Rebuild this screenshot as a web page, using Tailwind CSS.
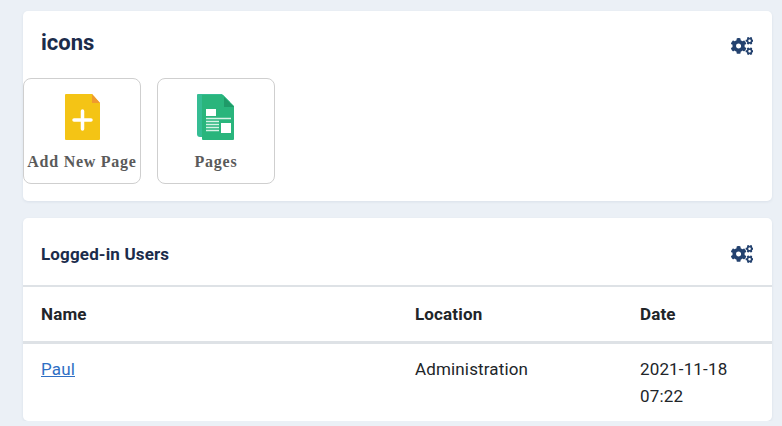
<!DOCTYPE html>
<html>
<head>
<meta charset="utf-8">
<script src="https://cdn.jsdelivr.net/npm/@tailwindcss/browser@4"></script>
</head>
<body class="m-0 bg-[#ebf0f6] font-['Roboto',sans-serif] text-[17px] tracking-[0.15px] text-[#212529] overflow-hidden">
<svg width="0" height="0" class="absolute"><defs><symbol id="cogs" viewBox="0 0 640 512"><path d="M512.1 191l-8.2 14.3c-3 5.3-9.4 7.5-15.1 5.4-11.8-4.4-22.6-10.7-32.1-18.6-4.6-3.8-5.8-10.5-2.8-15.7l8.2-14.3c-6.9-8-12.3-17.3-15.9-27.4h-16.5c-6 0-11.2-4.3-12.2-10.3-2-12-2.1-24.6 0-37.1 1-6 6.2-10.4 12.2-10.4h16.5c3.6-10.1 9-19.4 15.9-27.4l-8.2-14.3c-3-5.2-1.9-11.9 2.8-15.7 9.5-7.9 20.4-14.2 32.1-18.6 5.7-2.1 12.1.1 15.1 5.4l8.2 14.3c10.5-1.9 21.2-1.9 31.7 0L552 6.3c3-5.3 9.4-7.5 15.1-5.4 11.8 4.4 22.6 10.7 32.1 18.6 4.6 3.8 5.8 10.5 2.8 15.7l-8.2 14.3c6.9 8 12.3 17.3 15.9 27.4h16.5c6 0 11.2 4.3 12.2 10.3 2 12 2.1 24.6 0 37.1-1 6-6.2 10.4-12.2 10.4h-16.5c-3.6 10.1-9 19.4-15.9 27.4l8.2 14.3c3 5.2 1.9 11.9-2.8 15.7-9.5 7.9-20.4 14.2-32.1 18.6-5.7 2.1-12.1-.1-15.1-5.4l-8.2-14.3c-10.4 1.9-21.2 1.9-31.7 0zm-10.5-58.8c38.5 29.6 82.4-14.3 52.8-52.8-38.5-29.7-82.4 14.3-52.8 52.8zM386.3 286.1l33.7 16.8c10.1 5.8 14.5 18.1 10.5 29.1-8.9 24.2-26.4 46.4-42.6 65.8-7.4 8.9-20.2 11.1-30.3 5.3l-29.1-16.8c-16 13.7-34.6 24.6-54.9 31.7v33.6c0 11.6-8.3 21.6-19.7 23.6-24.6 4.2-50.4 4.4-75.9 0-11.5-2-20-11.9-20-23.6V418c-20.3-7.2-38.9-18-54.9-31.7L74 403c-10 5.8-22.9 3.6-30.3-5.3-16.2-19.4-33.3-41.6-42.2-65.7-4-10.9.4-23.2 10.5-29.1l33.3-16.8c-3.9-20.9-3.9-42.4 0-63.4L12 205.8c-10.1-5.8-14.6-18.1-10.5-29 8.9-24.2 26-46.4 42.2-65.8 7.4-8.9 20.2-11.1 30.3-5.3l29.1 16.8c16-13.7 34.6-24.6 54.9-31.7V57.1c0-11.5 8.2-21.5 19.6-23.5 24.6-4.2 50.5-4.4 76-.1 11.5 2 20 11.9 20 23.6v33.6c20.3 7.2 38.9 18 54.9 31.7l29.1-16.8c10-5.8 22.9-3.6 30.3 5.3 16.2 19.4 33.2 41.6 42.1 65.8 4 10.9.1 23.2-10 29.1l-33.7 16.8c3.9 21 3.9 42.5 0 63.5zm-117.6 21.1c59.2-77-28.7-164.9-105.7-105.7-59.2 77 28.7 164.9 105.7 105.7zm243.4 182.7l-8.2 14.3c-3 5.3-9.4 7.5-15.1 5.4-11.8-4.4-22.6-10.7-32.1-18.6-4.6-3.8-5.8-10.5-2.8-15.7l8.2-14.3c-6.9-8-12.3-17.3-15.9-27.4h-16.5c-6 0-11.2-4.3-12.2-10.3-2-12-2.1-24.6 0-37.1 1-6 6.2-10.4 12.2-10.4h16.5c3.6-10.1 9-19.4 15.9-27.4l-8.2-14.3c-3-5.2-1.9-11.9 2.8-15.7 9.5-7.9 20.4-14.2 32.1-18.6 5.7-2.1 12.1.1 15.1 5.4l8.2 14.3c10.5-1.9 21.2-1.9 31.7 0l8.2-14.3c3-5.3 9.4-7.5 15.1-5.4 11.8 4.4 22.6 10.7 32.1 18.6 4.6 3.8 5.8 10.5 2.8 15.7l-8.2 14.3c6.9 8 12.3 17.3 15.9 27.4h16.5c6 0 11.2 4.3 12.2 10.3 2 12 2.1 24.6 0 37.1-1 6-6.2 10.4-12.2 10.4h-16.5c-3.6 10.1-9 19.4-15.9 27.4l8.2 14.3c3 5.2 1.9 11.9-2.8 15.7-9.5 7.9-20.4 14.2-32.1 18.6-5.7 2.1-12.1-.1-15.1-5.4l-8.2-14.3c-10.4 1.9-21.2 1.9-31.7 0zM501.6 431c38.5 29.6 82.4-14.3 52.8-52.8-38.5-29.6-82.4 14.3-52.8 52.8z"/></symbol></defs></svg>
<main class="w-[749px] ml-[23px] pt-[11px] flex flex-col gap-[17px]">
  <section class="h-[190px] bg-white rounded-[5px] shadow-[0_1px_3px_rgba(30,50,90,0.08)]">
    <div class="h-[67px] pl-[18px] pr-[19px] flex justify-between items-start">
      <h2 class="mt-[19px] text-[22px] leading-[26px] font-bold tracking-[0px] text-[#1b2c4b]">icons</h2>
      <svg class="mt-[26px] w-[22.5px] h-[18px] fill-[#24426f]"><use href="#cogs"/></svg>
    </div>
    <div class="flex gap-4">
      <a class="w-[118px] h-[106px] border border-[#cfcfcf] rounded-[8px] flex flex-col items-center">
        <svg class="mt-[15px] w-[37px] h-[46px]" viewBox="0 0 37 46">
          <path d="M2 0H28L36 9V45a1 1 0 0 1-1 1H2a1 1 0 0 1-1-1V1a1 1 0 0 1 1-1Z" fill="#f4c415"/>
          <path d="M28 0L36 9H28Z" fill="#f09a2e"/>
          <path d="M10 26H27M18.500 17V35" stroke="#fff" stroke-width="3.500" stroke-linecap="round"/>
        </svg>
        <span class="mt-[12px] font-['Liberation_Serif',serif] font-bold text-[16px] leading-[20px] tracking-[0.75px] text-[#5a5a5a] whitespace-nowrap">Add New Page</span>
      </a>
      <a class="w-[118px] h-[106px] border border-[#cfcfcf] rounded-[8px] flex flex-col items-center">
        <svg class="mt-[15px] w-[38px] h-[46px]" viewBox="0 0 38 46">
          <path d="M1 0H25L33 8V43H3a3 3 0 0 1-3-3V1a1 1 0 0 1 1-1Z" fill="#35bd94"/>
          <path d="M5 1H26L37 12V45a1 1 0 0 1-1 1H6a1 1 0 0 1-1-1Z" fill="#29b57c"/>
          <path d="M27 3L37 13H27Z" fill="#1f9a68"/>
          <rect x="9" y="15" width="10" height="7" fill="#fff"/>
          <rect x="24" y="29" width="10" height="10" fill="#fff"/>
          <path d="M9 24.500H34M9 27.500H22M9 30.500H22M9 33.500H22M9 36.500H22" stroke="#d8f3e6" stroke-width="1.300"/>
        </svg>
        <span class="mt-[12px] font-['Liberation_Serif',serif] font-bold text-[16px] leading-[20px] tracking-[0.75px] text-[#5a5a5a]">Pages</span>
      </a>
    </div>
  </section>
  <section class="h-[203px] bg-white rounded-[5px] shadow-[0_1px_3px_rgba(30,50,90,0.08)]">
    <div class="h-[67px] pl-[18px] pr-[19px] flex justify-between items-center border-b-2 border-[#dee2e6] box-content -mb-px">
      <h3 class="text-[17px] leading-[24px] font-bold text-[#1b2c4b] mt-[5px]">Logged-in Users</h3>
      <svg class="mt-[5px] w-[22.5px] h-[18px] fill-[#24426f]"><use href="#cogs"/></svg>
    </div>
    <table class="w-full table-fixed border-collapse">
      <thead>
        <tr class="h-[56px] border-b-[3px] border-[#dee2e6] text-left">
          <th class="w-[374px] pl-[18px] font-bold pt-[2px]">Name</th>
          <th class="w-[225px] pl-[18px] font-bold pt-[2px]">Location</th>
          <th class="pl-[18px] font-bold pt-[2px]">Date</th>
        </tr>
      </thead>
      <tbody>
        <tr class="align-top leading-[27px]">
          <td class="pl-[18px] pt-[12px]"><a class="text-[#2f6fc4] underline" href="#">Paul</a></td>
          <td class="pl-[18px] pt-[12px]">Administration</td>
          <td class="pl-[18px] pt-[12px] pr-[30px]">2021-11-18 07:22</td>
        </tr>
      </tbody>
    </table>
  </section>
</main>
</body>
</html>
